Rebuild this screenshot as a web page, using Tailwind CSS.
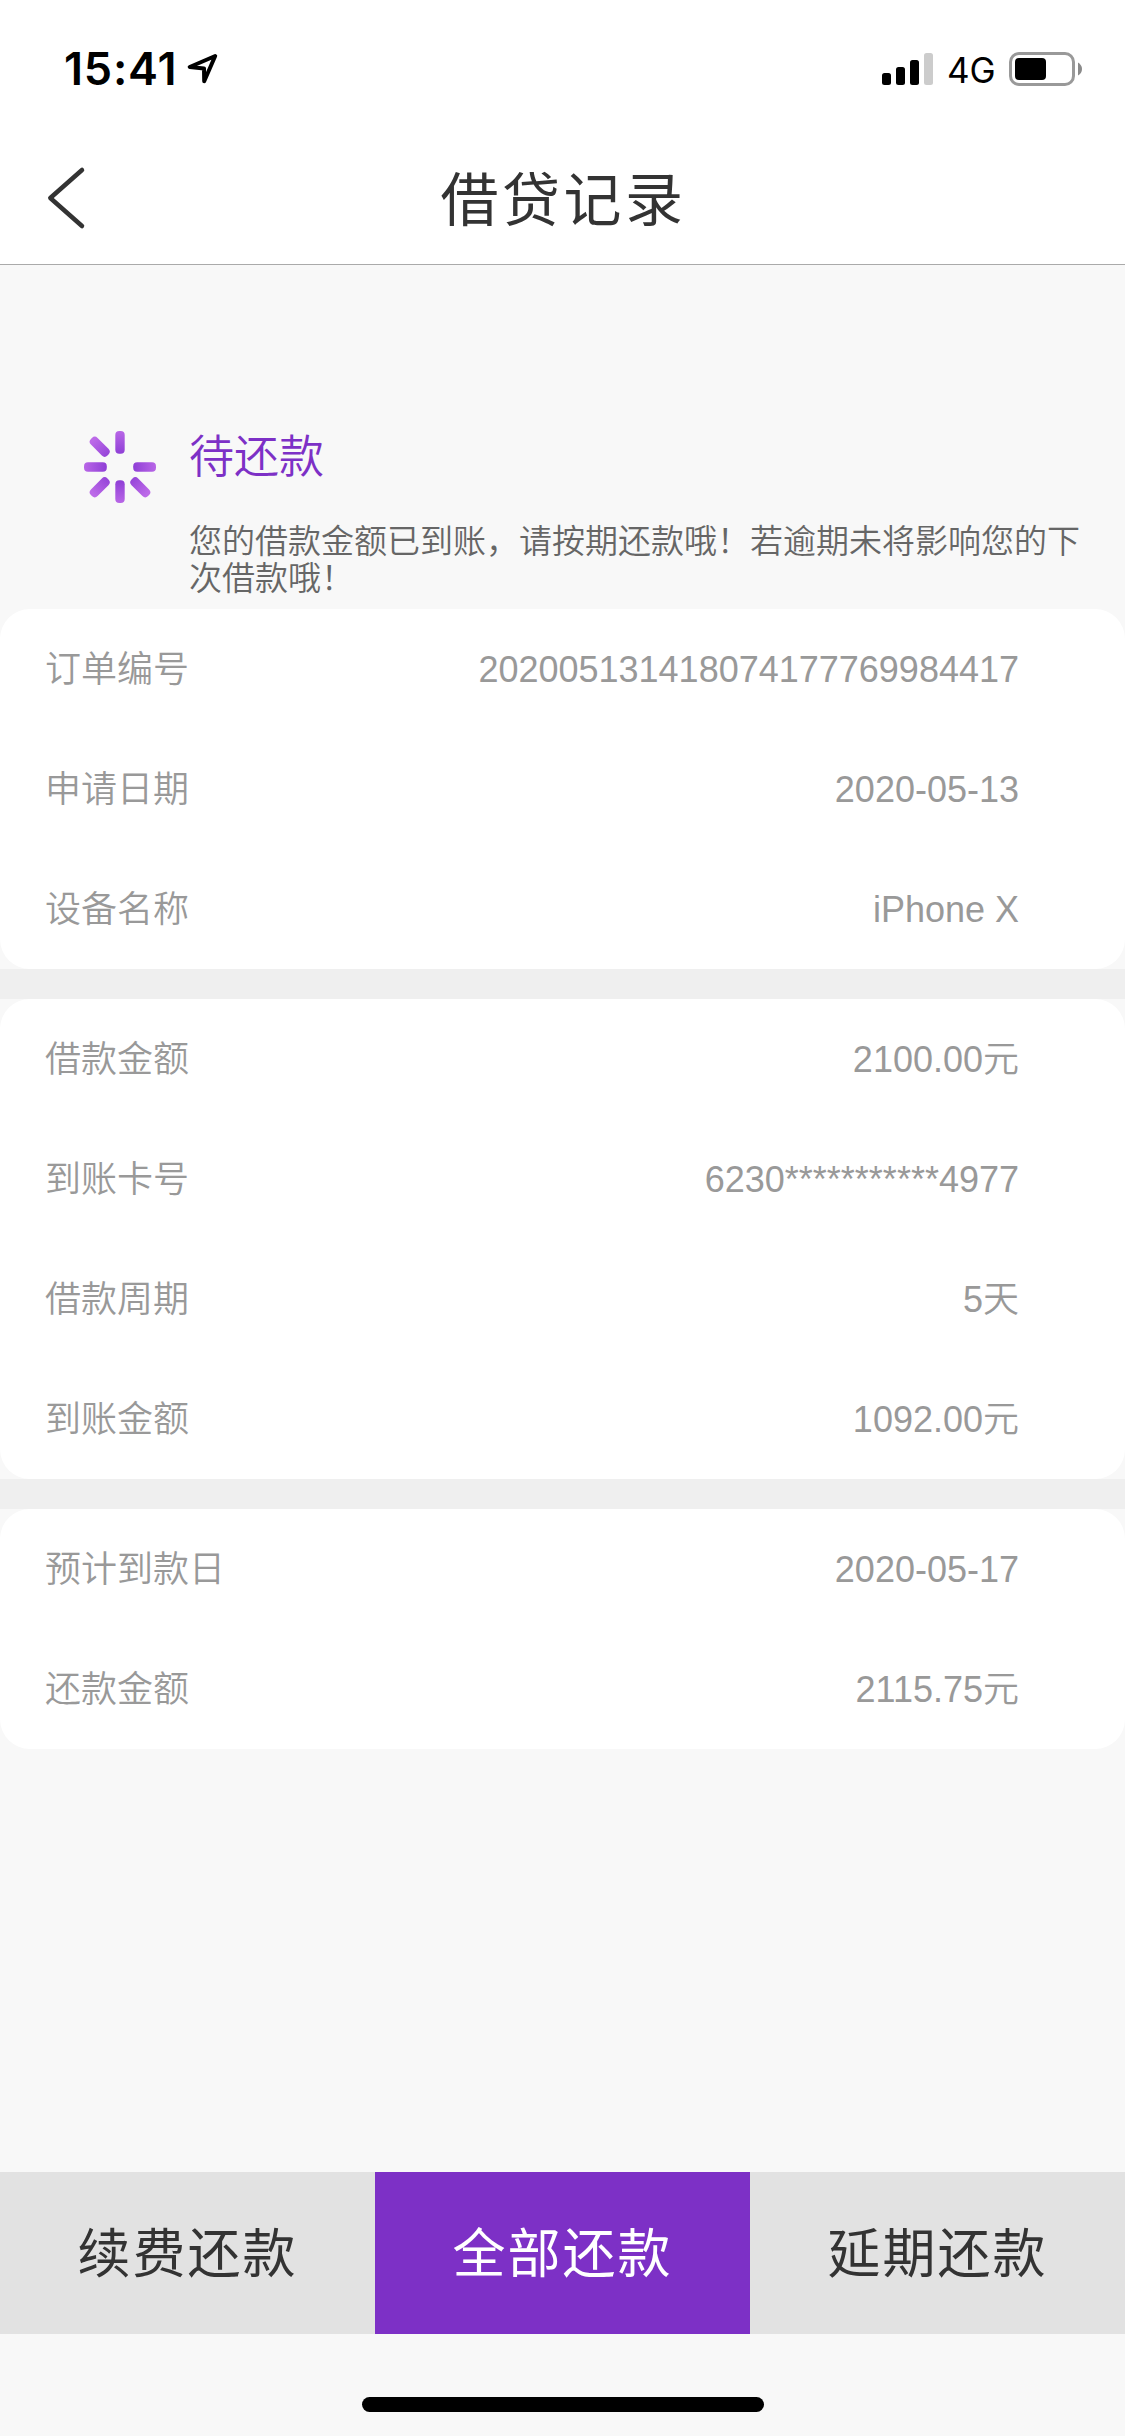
<!DOCTYPE html>
<html lang="zh-CN">
<head>
    <meta charset="UTF-8">
    <meta name="viewport" content="width=device-width, initial-scale=1.0">
    <title>借贷记录</title>
    <script src="https://cdn.jsdelivr.net/npm/@tailwindcss/browser@4"></script>
</head>
<body class="bg-[#f8f8f8] font-['Liberation_Sans','Noto_Sans_CJK_SC',sans-serif]">
<div class="w-[1125px] h-[2436px] flex flex-col overflow-hidden">
    <!-- Header -->
    <header class="h-[265px] shrink-0 bg-white border-b border-[#aaaaaa]">
        <!-- Status bar -->
        <div class="h-[132px] pt-[51px] pl-16 pr-[43px] flex justify-between items-start text-black">
            <div class="flex items-start">
                <span class="font-['Inter',sans-serif] font-semibold text-[45px] leading-9 w-[122px] tracking-[0.8px]">15:41</span>
                <svg class="w-8 h-9" viewBox="186 51 32 36" fill="none" stroke="#000" stroke-width="4" stroke-linejoin="round">
                    <path d="M215.2 56 L189.7 67 L204 68.4 L204.2 81.3 Z"/>
                </svg>
            </div>
            <div class="flex items-start">
                <svg class="w-[51px] h-9" viewBox="882 51 51 36">
                    <rect x="882" y="73" width="9" height="12" rx="2.5"/>
                    <rect x="896" y="67" width="9" height="18" rx="2.5"/>
                    <rect x="910" y="60" width="9" height="25" rx="2.5"/>
                    <rect x="924" y="53" width="9" height="32" rx="2.5" fill="#ccc"/>
                </svg>
                <span class="font-['Inter',sans-serif] text-[35px] leading-[38px] ml-3.5 w-[62px]">4G</span>
                <svg class="w-[73px] h-9" viewBox="1009 51 73 36">
                    <rect x="1010.5" y="53.5" width="63" height="31" rx="8.5" fill="none" stroke="#999" stroke-width="3"/>
                    <rect x="1015" y="58" width="31" height="22" rx="4"/>
                    <path d="M1078 62.5 Q1082 65 1082 69 Q1082 73 1078 75.5 Z" fill="#8a8a8a"/>
                </svg>
            </div>
        </div>
        <!-- Nav bar -->
        <div class="h-[132px] px-[45px] flex items-center">
            <svg class="w-[42px] h-[64px]" viewBox="45 166 42 64" fill="none" stroke="#333" stroke-width="4.5" stroke-linecap="round" stroke-linejoin="round">
                <path d="M82 170 L50.3 198 L82 226"/>
            </svg>
            <h1 class="grow text-center text-[58px] leading-[72px] tracking-[3.5px] text-[#333333] pr-[40px] pt-1.5">借贷记录</h1>
        </div>
    </header>

    <!-- Loan status -->
    <section class="h-[344px] shrink-0 pt-[159px] pl-[81px] flex">
        <svg class="w-[78px] h-[86px] shrink-0" viewBox="-39 -43 78 86">
            <defs>
                <radialGradient id="ray" gradientUnits="userSpaceOnUse" cx="0" cy="0" r="38">
                    <stop offset="0.35" stop-color="#8f3fd6"/>
                    <stop offset="1" stop-color="#bc6ae8"/>
                </radialGradient>
            </defs>
            <g fill="url(#ray)">
                <rect x="-4.7" y="-36" width="9.4" height="22.8" rx="4"/>
                <rect x="-4.7" y="13.2" width="9.4" height="22.8" rx="4"/>
                <rect x="-36" y="-4.7" width="22.8" height="9.4" rx="4"/>
                <rect x="13.2" y="-4.7" width="22.8" height="9.4" rx="4"/>
                <rect x="-4.7" y="17" width="9.4" height="23.4" rx="4" transform="rotate(45)"/>
                <rect x="-4.7" y="17" width="9.4" height="23.4" rx="4" transform="rotate(-45)"/>
                <rect x="-4.7" y="17" width="9.4" height="23.4" rx="4" transform="rotate(135)"/>
            </g>
        </svg>
        <div class="ml-[30px] pt-[7px]">
            <h2 class="text-[45px] leading-[54px] text-[#7d30c6] font-[350]">待还款</h2>
            <p class="mt-[38px] w-[900px] text-[33px] leading-[37px] text-[#666666] font-[350]">您的借款金额已到账，请按期还款哦！若逾期未将影响您的下次借款哦！</p>
        </div>
    </section>

    <!-- Details -->
    <section class="shrink-0 text-[36px] leading-[44px] text-[#999999] font-[350]">
        <dl class="bg-white rounded-[30px]">
            <div class="h-[120px] pl-[45px] pr-[106px] pt-0.5 flex items-center justify-between"><dt>订单编号</dt><dd>202005131418074177769984417</dd></div>
            <div class="h-[120px] pl-[45px] pr-[106px] pt-0.5 flex items-center justify-between"><dt>申请日期</dt><dd>2020-05-13</dd></div>
            <div class="h-[120px] pl-[45px] pr-[106px] pt-0.5 flex items-center justify-between"><dt>设备名称</dt><dd>iPhone X</dd></div>
        </dl>
        <div class="h-[30px] bg-[#efefef]"></div>
        <dl class="bg-white rounded-[30px]">
            <div class="h-[120px] pl-[45px] pr-[106px] pt-0.5 flex items-center justify-between"><dt>借款金额</dt><dd>2100.00元</dd></div>
            <div class="h-[120px] pl-[45px] pr-[106px] pt-0.5 flex items-center justify-between"><dt>到账卡号</dt><dd>6230***********4977</dd></div>
            <div class="h-[120px] pl-[45px] pr-[106px] pt-0.5 flex items-center justify-between"><dt>借款周期</dt><dd>5天</dd></div>
            <div class="h-[120px] pl-[45px] pr-[106px] pt-0.5 flex items-center justify-between"><dt>到账金额</dt><dd>1092.00元</dd></div>
        </dl>
        <div class="h-[30px] bg-[#efefef]"></div>
        <dl class="bg-white rounded-[30px]">
            <div class="h-[120px] pl-[45px] pr-[106px] pt-0.5 flex items-center justify-between"><dt>预计到款日</dt><dd>2020-05-17</dd></div>
            <div class="h-[120px] pl-[45px] pr-[106px] pt-0.5 flex items-center justify-between"><dt>还款金额</dt><dd>2115.75元</dd></div>
        </dl>
    </section>

    <!-- Actions -->
    <footer class="mt-auto shrink-0">
        <div class="grid grid-cols-3 h-[162px] text-[53px] leading-[64px] tracking-[2px]">
            <button class="bg-[#e2e2e2] text-[#333333] pt-1">续费还款</button>
            <button class="bg-[#7d30c6] text-white pt-1">全部还款</button>
            <button class="bg-[#e2e2e2] text-[#333333] pt-1">延期还款</button>
        </div>
        <div class="h-[102px] pt-[63px]">
            <div class="w-[402px] h-[15px] mx-auto rounded-full bg-black"></div>
        </div>
    </footer>
</div>
</body>
</html>
